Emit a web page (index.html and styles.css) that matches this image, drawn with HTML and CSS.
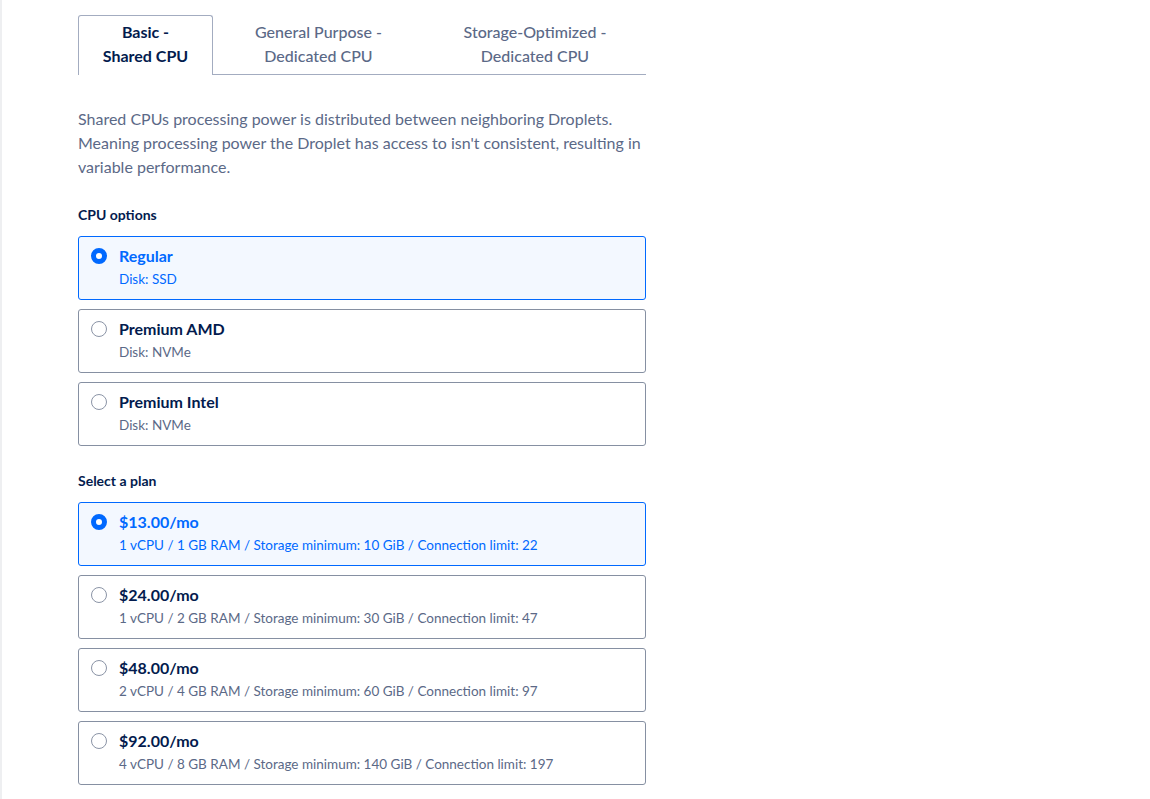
FILE: index.html
```html
<!DOCTYPE html>
<html lang="en">
<head>
    <meta charset="UTF-8">
    <title>Droplet size</title>
    <link rel="stylesheet" href="styles.css">
</head>
<body>
<div class="page">
    <div class="panel">
        <ul class="tabs">
            <li class="tab active">Basic -<br>Shared CPU</li>
            <li class="tab">General Purpose -<br>Dedicated CPU</li>
            <li class="tab">Storage-Optimized -<br>Dedicated CPU</li>
        </ul>

        <p class="desc">Shared CPUs processing power is distributed between neighboring Droplets. Meaning processing power the Droplet has access to isn't consistent, resulting in variable performance.</p>

        <h4 class="label">CPU options</h4>
        <ul class="options">
            <li class="option selected">
                <span class="radio"></span>
                <div class="info">
                    <div class="title">Regular</div>
                    <div class="sub">Disk: SSD</div>
                </div>
            </li>
            <li class="option">
                <span class="radio"></span>
                <div class="info">
                    <div class="title">Premium AMD</div>
                    <div class="sub">Disk: NVMe</div>
                </div>
            </li>
            <li class="option">
                <span class="radio"></span>
                <div class="info">
                    <div class="title">Premium Intel</div>
                    <div class="sub">Disk: NVMe</div>
                </div>
            </li>
        </ul>

        <h4 class="label">Select a plan</h4>
        <ul class="options">
            <li class="option selected">
                <span class="radio"></span>
                <div class="info">
                    <div class="title">$13.00/mo</div>
                    <div class="sub">1 vCPU / 1 GB RAM / Storage minimum: 10 GiB / Connection limit: 22</div>
                </div>
            </li>
            <li class="option">
                <span class="radio"></span>
                <div class="info">
                    <div class="title">$24.00/mo</div>
                    <div class="sub">1 vCPU / 2 GB RAM / Storage minimum: 30 GiB / Connection limit: 47</div>
                </div>
            </li>
            <li class="option">
                <span class="radio"></span>
                <div class="info">
                    <div class="title">$48.00/mo</div>
                    <div class="sub">2 vCPU / 4 GB RAM / Storage minimum: 60 GiB / Connection limit: 97</div>
                </div>
            </li>
            <li class="option">
                <span class="radio"></span>
                <div class="info">
                    <div class="title">$92.00/mo</div>
                    <div class="sub">4 vCPU / 8 GB RAM / Storage minimum: 140 GiB / Connection limit: 197</div>
                </div>
            </li>
        </ul>
    </div>
</div>
</body>
</html>
```

FILE: styles.css
```css
/* reset */
body,h4,p,ul,li{margin:0;padding:0}
ul{list-style:none}
body{font:16px/1.5 Lato, "Open Sans", sans-serif;color:#5b6987;background:#fff;}

.page{
    min-height:799px;
    border-left:2px solid #eeeff1;
    padding:15px 0 0 76px;
    box-sizing:border-box;
}
.panel{
    width:568px;
}

/* tabs */
.tabs{
    display:flex;
    border-bottom:1px solid #a3acc0;
}
.tab{
    text-align:center;
    padding:5px 0 6px;
    color:#5b6987;
    font-weight:500;
    line-height:24px;
}
.tab:nth-child(1){width:135px;}
.tab:nth-child(2){width:211px;}
.tab:nth-child(3){width:222px;}
.tab.active{
    color:#031b4e;
    font-weight:700;
    border:1px solid #a3acc0;
    border-bottom:none;
    border-radius:3px 3px 0 0;
    background:#fff;
    margin-bottom:-1px;
    padding:4px 0 7px;
    box-sizing:border-box;
}

.desc{
    margin-top:32px;
    line-height:24px;
}

.label{
    margin-top:26px;
    font-size:14px;
    font-weight:700;
    color:#031b4e;
    line-height:20px;
}

/* option cards */
.options{
    display:flex;
    flex-direction:column;
    gap:9px;
    margin-top:11px;
}
.options + .label{margin-top:25px;}
.option{
    display:flex;
    align-items:flex-start;
    gap:12px;
    height:64px;
    box-sizing:border-box;
    padding:9px 12px 0;
    border:1px solid #8690a2;
    border-radius:3px;
    background:#fff;
}
.radio{
    width:16px;
    height:16px;
    margin-top:2px;
    border:1px solid #8b94a6;
    border-radius:50%;
    box-sizing:border-box;
    flex:none;
}
.title{
    font-size:16px;
    font-weight:700;
    color:#031b4e;
    line-height:20px;
}
.sub{
    margin-top:3px;
    font-size:13.5px;
    line-height:20px;
    color:#5b6987;
}
.option.selected{
    border-color:#0069ff;
    background:#f3f8ff;
}
.option.selected .radio{
    border:5px solid #0069ff;
    background:#fff;
}
.option.selected .title,
.option.selected .sub{
    color:#0069ff;
}
```
